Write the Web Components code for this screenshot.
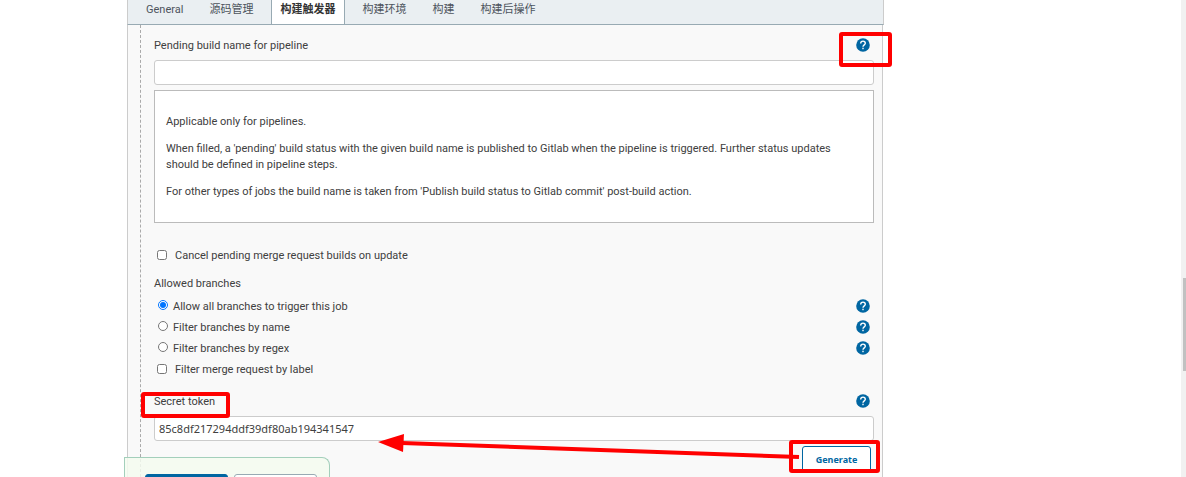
<!DOCTYPE html>
<html lang="zh-CN">
<head>
<meta charset="utf-8">
<title>构建触发器</title>
<style>
  body {
    margin: 0;
    background: #fff;
    color: #404040;
    font: 11px/16px Roboto, "Noto Sans CJK SC", sans-serif;
  }
</style>
</head>
<body>
<config-page>
  <config-tabs slot="tabs"></config-tabs>
  <form-row label="Pending build name for pipeline" marked>
    <text-field name="Pending build name for pipeline"></text-field>
    <help-text>
      <p>Applicable only for pipelines.</p>
      <p>When filled, a 'pending' build status with the given build name is published to Gitlab when the pipeline is triggered. Further status updates should be defined in pipeline steps.</p>
      <p>For other types of jobs the build name is taken from 'Publish build status to Gitlab commit' post-build action.</p>
    </help-text>
  </form-row>
  <branch-options></branch-options>
  <secret-token></secret-token>
  <save-bar slot="footer"></save-bar>
</config-page>

<script>
class BaseElement extends HTMLElement {
  constructor() {
    super();
    this.attachShadow({ mode: 'open' });
  }

  connectedCallback() {
    this.shadowRoot.innerHTML = this.getTemplate();
  }
}

class ConfigPage extends BaseElement {
  getTemplate() {
    return `
      <style>
        :host {
          display: flex;
          height: 100vh;
          overflow: hidden;
          position: relative;
        }
        .left { flex: 127 1 0; }
        .right { flex: 298 1 0; }
        main {
          flex: 756 1 0;
          min-width: 0;
          display: flex;
          flex-direction: column;
          position: relative;
        }
        .panel {
          flex: 1;
          background: #f9f9f9;
          border: solid #ccc;
          border-width: 0 1px;
          padding: 0 8px 0 12px;
        }
        .section {
          box-sizing: border-box;
          height: 100%;
          padding: 10px 0 0 13px;
          border-left: 1px dashed #aaa;
        }
        .scrollbar {
          flex: 0 0 5px;
          display: flex;
          flex-direction: column;
          align-items: flex-end;
          background: #f1f1f1;
        }
        .scrollbar::before { content: ""; flex: 278 1 0; }
        .scrollbar::after { content: ""; flex: 106 1 0; }
        .thumb { flex: 93 1 0; width: 3px; background: #c1c1c1; }
      </style>
      <div class="left"></div>
      <main>
        <slot name="tabs"></slot>
        <div class="panel"><div class="section"><slot></slot></div></div>
        <slot name="footer"></slot>
      </main>
      <div class="right"></div>
      <div class="scrollbar"><div class="thumb"></div></div>
    `;
  }
}

class ConfigTabs extends BaseElement {
  getTemplate() {
    return `
      <style>
        :host {
          display: flex;
          height: 24px;
          margin-right: -1px;
          padding-left: 3px;
          background: #eaeff2;
          border: solid #ccc;
          border-width: 0 1px;
          border-bottom: 1px solid #98aab3;
        }
        a {
          box-sizing: border-box;
          padding: 2px 14px 0 15px;
          color: #4d545d;
          text-decoration: none;
          white-space: nowrap;
        }
        a + a { padding-left: 12px; }
        a.active {
          padding: 2px 9px 0 8px;
          margin: 0 5px 0 4px;
          background: #fff;
          border: solid #98aab3;
          border-width: 0 1px;
          color: #333;
          font-weight: bold;
        }
      </style>
      <a href="#general">General</a>
      <a href="#scm">源码管理</a>
      <a href="#triggers" class="active">构建触发器</a>
      <a href="#env">构建环境</a>
      <a href="#build">构建</a>
      <a href="#post">构建后操作</a>
    `;
  }
}

class HelpButton extends BaseElement {
  getTemplate() {
    return `
      <style>
        :host { display: block; width: 14px; height: 14px; }
        button { display: block; padding: 0; border: 0; background: none; cursor: pointer; }
        svg { display: block; }
      </style>
      <button type="button" aria-label="Help">
        <svg width="14" height="14" viewBox="0 0 14 14">
          <circle cx="7" cy="7" r="6.8" fill="#0066a2"/>
          <path d="M4.7 5.4C4.7 4 5.7 3.1 7 3.1S9.3 4 9.3 5.3C9.3 6.8 7 6.9 7 8.7" fill="none" stroke="#fff" stroke-width="1.4"/>
          <rect x="6.3" y="9.7" width="1.4" height="1.5" fill="#fff"/>
        </svg>
      </button>
    `;
  }
}

class FormRow extends BaseElement {
  getTemplate() {
    return `
      <style>
        :host { display: block; }
        .head {
          box-sizing: border-box;
          display: flex;
          justify-content: space-between;
          align-items: flex-start;
          height: 21px;
          padding: 3px 4px 0 0;
          margin-bottom: 4px;
          position: relative;
        }
        /* frame drawn over the help icon */
        .frame {
          position: absolute;
          top: -3px;
          right: -18px;
          width: 45px;
          height: 27px;
          border: 4px solid #f00;
          border-radius: 3px;
          pointer-events: none;
        }
      </style>
      <div class="head">
        <span>${this.getAttribute('label')}</span>
        <help-button></help-button>
        ${this.hasAttribute('marked') ? '<div class="frame"></div>' : ''}
      </div>
      <slot></slot>
    `;
  }
}

class TextField extends BaseElement {
  getTemplate() {
    return `
      <style>
        :host { display: block; }
        input {
          display: block;
          box-sizing: border-box;
          width: 100%;
          height: 25px;
          padding: 0 4px;
          border: 1px solid #ccc;
          border-radius: 3px;
          background: #fff;
          color: #404040;
          font: 11px "Noto Sans", sans-serif;
        }
      </style>
      <input type="text" aria-label="${this.getAttribute('name')}" value="${this.getAttribute('value') || ''}">
    `;
  }
}

class HelpText extends BaseElement {
  getTemplate() {
    return `
      <style>
        :host {
          display: block;
          margin-top: 5px;
          padding: 12px 11px 11px;
          background: #fff;
          border: 1px solid #bbb;
        }
        .body { display: flow-root; }
        ::slotted(p) { margin: 11px 0; }
      </style>
      <div class="body"><slot></slot></div>
    `;
  }
}

class BranchOptions extends BaseElement {
  getTemplate() {
    return `
      <style>
        :host { display: block; padding-top: 22px; }
        .row {
          display: flex;
          justify-content: space-between;
          align-items: center;
          height: 21px;
          padding: 0 4px 0 3px;
        }
        label { display: flex; align-items: center; }
        input { box-sizing: border-box; width: 10px; height: 10px; }
        input[type=checkbox] { margin: 0 8px 2px 0; }
        input[type=radio] { margin: 0 5px 3px 1px; }
        help-button { margin-bottom: 2px; }
        .title { height: 21px; line-height: 21px; margin: 7px 0 2px; }
      </style>
      <div class="row"><label><input type="checkbox">Cancel pending merge request builds on update</label></div>
      <div class="title">Allowed branches</div>
      <div class="row"><label><input type="radio" name="branch" checked>Allow all branches to trigger this job</label><help-button></help-button></div>
      <div class="row"><label><input type="radio" name="branch">Filter branches by name</label><help-button></help-button></div>
      <div class="row"><label><input type="radio" name="branch">Filter branches by regex</label><help-button></help-button></div>
      <div class="row"><label><input type="checkbox">Filter merge request by label</label></div>
    `;
  }
}

class SecretToken extends BaseElement {
  getTemplate() {
    return `
      <style>
        :host { display: block; padding-top: 11px; position: relative; }
        .actions { display: flex; justify-content: flex-end; padding: 5px 3px 0 0; }
        button {
          width: 69px;
          height: 26px;
          border: 1px solid #0066a2;
          border-radius: 3px;
          background: #fff;
          color: #0066a2;
          font: bold 9px "Noto Sans", sans-serif;
        }
        .frame {
          position: absolute;
          box-sizing: border-box;
          border: 4px solid #f00;
          border-radius: 3px;
          pointer-events: none;
        }
        .label-frame { left: -13px; top: 12px; width: 89px; height: 26px; }
        .button-frame { right: -6px; bottom: -1px; width: 91px; height: 33px; }
        .arrow { position: absolute; right: 74px; top: 52px; pointer-events: none; }
      </style>
      <form-row label="Secret token">
        <text-field name="Secret token" value="85c8df217294ddf39df80ab194341547"></text-field>
      </form-row>
      <div class="actions"><button type="button">Generate</button></div>
      <div class="frame label-frame"></div>
      <div class="frame button-frame"></div>
      <svg class="arrow" width="422" height="30" viewBox="0 0 422 30">
        <path d="M24 11L421 25" stroke="#f00" stroke-width="4"/>
        <path d="M0 10L26 2L25 20Z" fill="#f00"/>
      </svg>
    `;
  }
}

class SaveBar extends BaseElement {
  getTemplate() {
    return `
      <style>
        :host {
          position: absolute;
          left: -3px;
          bottom: 0;
          box-sizing: border-box;
          width: 206px;
          height: 20px;
          overflow: hidden;
          display: flex;
          gap: 6px;
          padding: 16px 12px 0 20px;
          background: rgba(245, 252, 240, .85);
          border: 1px solid #a3cfbb;
          border-width: 1px 1px 0 1px;
          border-top-right-radius: 8px;
        }
        button {
          flex: 1;
          height: 24px;
          border: 1px solid #98aab3;
          border-radius: 3px;
          background: #fff;
        }
        .primary { background: #0066a2; border-color: #0066a2; }
      </style>
      <button type="button" class="primary" aria-label="Save"></button>
      <button type="button" aria-label="Apply"></button>
    `;
  }
}

customElements.define('config-page', ConfigPage);
customElements.define('config-tabs', ConfigTabs);
customElements.define('help-button', HelpButton);
customElements.define('form-row', FormRow);
customElements.define('text-field', TextField);
customElements.define('help-text', HelpText);
customElements.define('branch-options', BranchOptions);
customElements.define('secret-token', SecretToken);
customElements.define('save-bar', SaveBar);
</script>
</body>
</html>
